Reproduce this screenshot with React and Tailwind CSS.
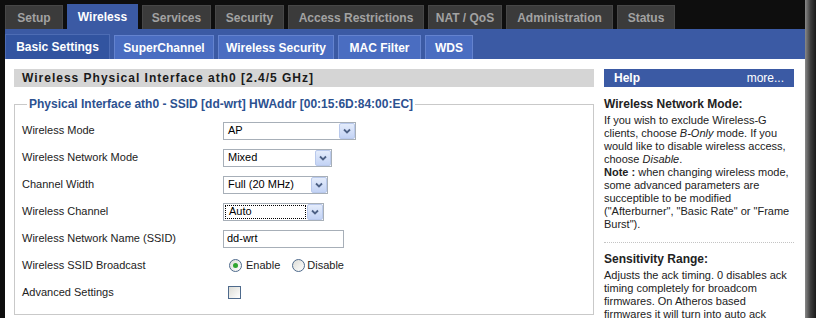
import React from 'react';

const font = { fontFamily: '"Liberation Sans", Arial, sans-serif' };

const mainTabs = [
  { label: 'Setup', w: 'w-[58px]' },
  { label: 'Wireless', w: 'w-[71px]', active: true },
  { label: 'Services', w: 'w-[69px]' },
  { label: 'Security', w: 'w-[69px]' },
  { label: 'Access Restrictions', w: 'w-[136px]' },
  { label: 'NAT / QoS', w: 'w-[74px]' },
  { label: 'Administration', w: 'w-[107px]' },
  { label: 'Status', w: 'w-[58px]' },
];

const subTabs = [
  { label: 'Basic Settings', w: 'w-[105px]', active: true },
  { label: 'SuperChannel', w: 'w-[100px]' },
  { label: 'Wireless Security', w: 'w-[116px]' },
  { label: 'MAC Filter', w: 'w-[83px]' },
  { label: 'WDS', w: 'w-[48px]' },
];

function ArrowButton() {
  return (
    <span className="w-[16px] h-[16px] rounded-[2px] border border-[#b9c9ec] bg-gradient-to-b from-[#e4ecfb] to-[#c3d3f5] flex items-center justify-center">
      <svg width="8" height="6" viewBox="0 0 8 6">
        <path d="M1 1.5 L4 4.5 L7 1.5" fill="none" stroke="#4d6185" strokeWidth="1.8" />
      </svg>
    </span>
  );
}

function Select({ value, w, focused }) {
  return (
    <div className={`${w} h-[18px] border border-[#a7afb8] bg-white flex items-center`}>
      <div className="flex-1 h-full p-[1px]">
        <div className={`h-full flex items-center pl-[3px] text-[11px] text-black ${focused ? 'border border-dotted border-black' : ''}`}>
          {value}
        </div>
      </div>
      <ArrowButton />
    </div>
  );
}

function Radio({ checked }) {
  return (
    <span className="w-[13px] h-[13px] rounded-full border border-[#4e6a8c] bg-gradient-to-br from-[#dcdcd6] to-white flex items-center justify-center">
      {checked && <span className="w-[5px] h-[5px] rounded-full bg-[#2fa52f]" />}
    </span>
  );
}

function Row({ label, children }) {
  return (
    <div className="h-[27px] flex items-center">
      <span className="w-[201px] text-[11px] text-[#222]">{label}</span>
      {children}
    </div>
  );
}

export default function App() {
  return (
    <div className="w-[816px] h-[318px] bg-[#0e0e0e] flex overflow-hidden" style={font}>
      <div className="w-[800px] ml-[5px] flex flex-col">
        {/* main tabs */}
        <div className="h-[29px] shrink-0 flex items-end gap-[4px]">
          {mainTabs.map((t) =>
            t.active ? (
              <div key={t.label} className={`${t.w} h-[25px] bg-[#3b5aa4] text-white text-[12px] font-bold flex items-center justify-center`}>
                {t.label}
              </div>
            ) : (
              <div key={t.label} className={`${t.w} h-[24px] bg-[#3b3b3b] border-t border-x border-[#474747] text-[#a2a2a2] text-[12px] font-bold flex items-center justify-center`}>
                {t.label}
              </div>
            )
          )}
        </div>

        {/* sub tabs */}
        <div className="h-[30px] shrink-0 bg-[#3b5aa4] flex items-end gap-[4px]">
          {subTabs.map((t) =>
            t.active ? (
              <div key={t.label} className={`${t.w} h-[25px] bg-[#3254a0] border-t border-x border-[#4d6cb4] text-white text-[12px] font-bold flex items-center justify-center`}>
                {t.label}
              </div>
            ) : (
              <div key={t.label} className={`${t.w} h-[24px] bg-[#4a6dc1] border-t border-x border-[#6483cf] text-white text-[12px] font-bold flex items-center justify-center`}>
                {t.label}
              </div>
            )
          )}
        </div>

        {/* content */}
        <div className="flex-1 min-h-0 overflow-hidden bg-white flex items-start pt-[10px] pl-[9px]">
          <div className="w-[580px] shrink-0">
            <div className="h-[18px] bg-[#d5d5d5] pl-[8px] flex items-center text-[12px] font-bold tracking-[1px] text-[#1a1a1a]">
              Wireless Physical Interface ath0 [2.4/5 GHz]
            </div>
            <fieldset className="mt-[10px] border border-[#c9c9c9] pl-[7px] pb-[8px]">
              <legend className="ml-[5px] px-[2px] text-[12px] leading-[14px] font-bold text-[#2c5190]">
                Physical Interface ath0 - SSID [dd-wrt] HWAddr [00:15:6D:84:00:EC]
              </legend>
              <div className="pt-[6px]">
                <Row label="Wireless Mode">
                  <Select value="AP" w="w-[133px]" />
                </Row>
                <Row label="Wireless Network Mode">
                  <Select value="Mixed" w="w-[109px]" />
                </Row>
                <Row label="Channel Width">
                  <Select value="Full (20 MHz)" w="w-[105px]" />
                </Row>
                <Row label="Wireless Channel">
                  <Select value="Auto" w="w-[101px]" focused />
                </Row>
                <Row label="Wireless Network Name (SSID)">
                  <div className="w-[121px] h-[18px] border border-[#a7afb8] pl-[3px] flex items-center text-[11px] text-black">
                    dd-wrt
                  </div>
                </Row>
                <Row label="Wireless SSID Broadcast">
                  <div className="flex items-center text-[11px] text-[#222] pl-[6px]">
                    <Radio checked />
                    <span className="ml-[4px]">Enable</span>
                    <span className="ml-[12px]"><Radio /></span>
                    <span className="ml-[2px]">Disable</span>
                  </div>
                </Row>
                <Row label="Advanced Settings">
                  <span className="ml-[5px] w-[13px] h-[13px] border border-[#4e6a8c] bg-gradient-to-br from-[#dcdcd6] to-white" />
                </Row>
              </div>
            </fieldset>
          </div>

          {/* help */}
          <div className="w-[190px] shrink-0 ml-[10px] text-[#222]">
            <div className="h-[18px] bg-[#3b5aa4] text-white text-[12px] flex items-center justify-between px-[10px]">
              <span className="font-bold">Help</span>
              <span>more...</span>
            </div>
            <div className="mt-[10px] text-[12px] leading-[14px] font-bold">Wireless Network Mode:</div>
            <div className="mt-[3px] text-[11px] leading-[13px] whitespace-nowrap">
              If you wish to exclude Wireless-G<br />
              clients, choose <i>B-Only</i> mode. If you<br />
              would like to disable wireless access,<br />
              choose <i>Disable</i>.<br />
              <b>Note :</b> when changing wireless mode,<br />
              some advanced parameters are<br />
              succeptible to be modified<br />
              ("Afterburner", "Basic Rate" or "Frame<br />
              Burst").
            </div>
            <div className="mt-[11px] border-t border-dotted border-[#c4c4c4]" />
            <div className="mt-[9px] text-[12px] leading-[14px] font-bold">Sensitivity Range:</div>
            <div className="mt-[3px] text-[11px] leading-[13px] whitespace-nowrap">
              Adjusts the ack timing. 0 disables ack<br />
              timing completely for broadcom<br />
              firmwares. On Atheros based<br />
              firmwares it will turn into auto ack
            </div>
          </div>
        </div>
      </div>
      <div className="w-[11px] bg-gradient-to-r from-[#8a8a8a] via-[#3e3e3e] to-[#1a1a1a]" />
    </div>
  );
}
